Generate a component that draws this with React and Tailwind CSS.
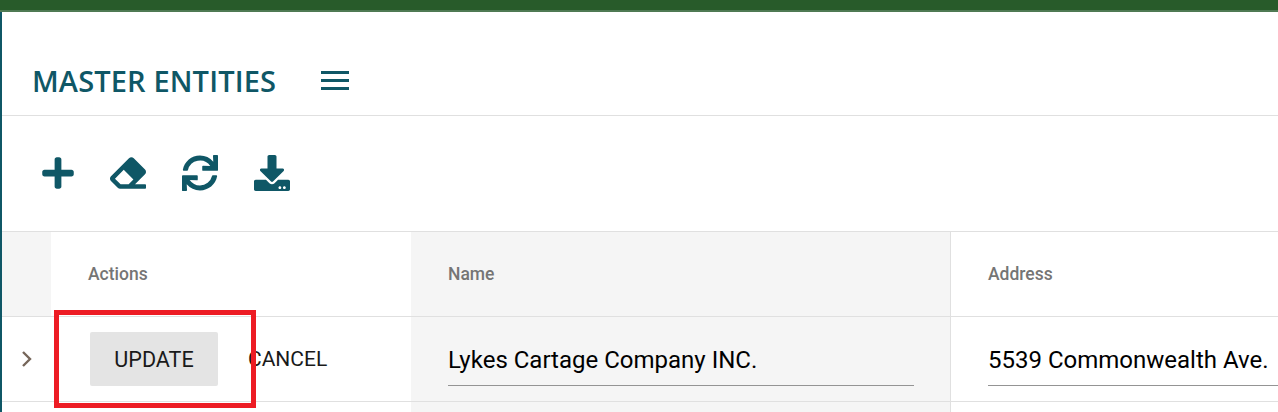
import React from 'react';
import { FaPlus, FaEraser, FaSync, FaDownload } from 'react-icons/fa';

const TOOLS = [
    { id: 'add', icon: FaPlus, box: 'w-[32px]' },
    { id: 'clear', icon: FaEraser, box: 'w-[36px]' },
    { id: 'refresh', icon: FaSync, box: 'w-[36px]' },
    { id: 'export', icon: FaDownload, box: 'w-[36px]' },
];

export default function App() {
    return (
        <div className="relative h-[412px] w-[1278px] overflow-hidden bg-white font-['Roboto',sans-serif]">
            <div className="h-[12px] border-b-2 border-[#4f7a53] bg-[#285b2a]" />

            <div className="h-[400px] border-l-2 border-[#0f5766]">
                <div className="flex h-[104px] items-end border-b border-[#e0e0e0] pb-[16px] pl-[30px]">
                    <h1 className="font-['Open_Sans',sans-serif] text-[29px] leading-[36px] font-semibold tracking-[0.14px] text-[#0f5766]">
                        MASTER ENTITIES
                    </h1>
                    <div className="mb-[9px] ml-[45px] flex w-[28px] flex-col gap-[5px]">
                        <span className="h-[3px] bg-[#0f5766]" />
                        <span className="h-[3px] bg-[#0f5766]" />
                        <span className="h-[3px] bg-[#0f5766]" />
                    </div>
                </div>

                <div className="flex h-[116px] items-center gap-[36px] border-b border-[#e0e0e0] pb-[2px] pl-[40px] text-[#0f5766]">
                    {TOOLS.map((tool) => (
                        <tool.icon key={tool.id} className={`h-[36px] ${tool.box}`} />
                    ))}
                </div>

                <div className="flex h-[85px] border-b border-[#e0e0e0] text-[17.5px] font-medium text-[#757575]">
                    <div className="w-[49px] bg-[#f5f5f5]" />
                    <div className="flex w-[360px] items-center pt-[1px] pl-[37px]">Actions</div>
                    <div className="flex w-[539px] items-center bg-[#f5f5f5] pt-[1px] pl-[37px]">Name</div>
                    <div className="flex flex-1 items-center border-l border-[#e0e0e0] pt-[1px] pl-[37px]">Address</div>
                </div>

                <div className="flex h-[85px] border-b border-[#e0e0e0]">
                    <div className="flex w-[49px] items-center pl-[19px] text-[#76665a]">
                        <svg width="13" height="18" viewBox="0 0 13 18" fill="none" stroke="currentColor" strokeWidth="2.4">
                            <path d="M2 2l7 7-7 7" />
                        </svg>
                    </div>
                    <div className="flex w-[360px] items-center pl-[39px] text-[21px] text-[#1a1a1a]">
                        <button className="h-[54px] w-[128px] rounded-[2px] bg-[#e4e4e4] pt-[2px] text-[21.6px]">UPDATE</button>
                        <button className="ml-[30px] pt-[2px]">CANCEL</button>
                    </div>
                    <div className="flex w-[539px] bg-[#f5f5f5] pl-[37px]">
                        <div className="mt-[25px] h-[44px] w-[466px] border-b border-[#949494] text-[24px] leading-[36px] text-black">
                            Lykes Cartage Company INC.
                        </div>
                    </div>
                    <div className="flex flex-1 border-l border-[#e0e0e0] pl-[37px]">
                        <div className="mt-[25px] h-[44px] flex-1 border-b border-[#949494] text-[24px] leading-[36px] text-black">
                            5539 Commonwealth Ave.
                        </div>
                    </div>
                </div>

                <div className="flex h-[11px]">
                    <div className="w-[409px]" />
                    <div className="w-[539px] bg-[#f5f5f5]" />
                    <div className="flex-1 border-l border-[#e0e0e0]" />
                </div>
            </div>

            {/* annotation drawn over the row */}
            <div className="absolute top-[310px] left-[54px] h-[98px] w-[202px] border-[5px] border-[#ed1c24]" />
        </div>
    );
}
